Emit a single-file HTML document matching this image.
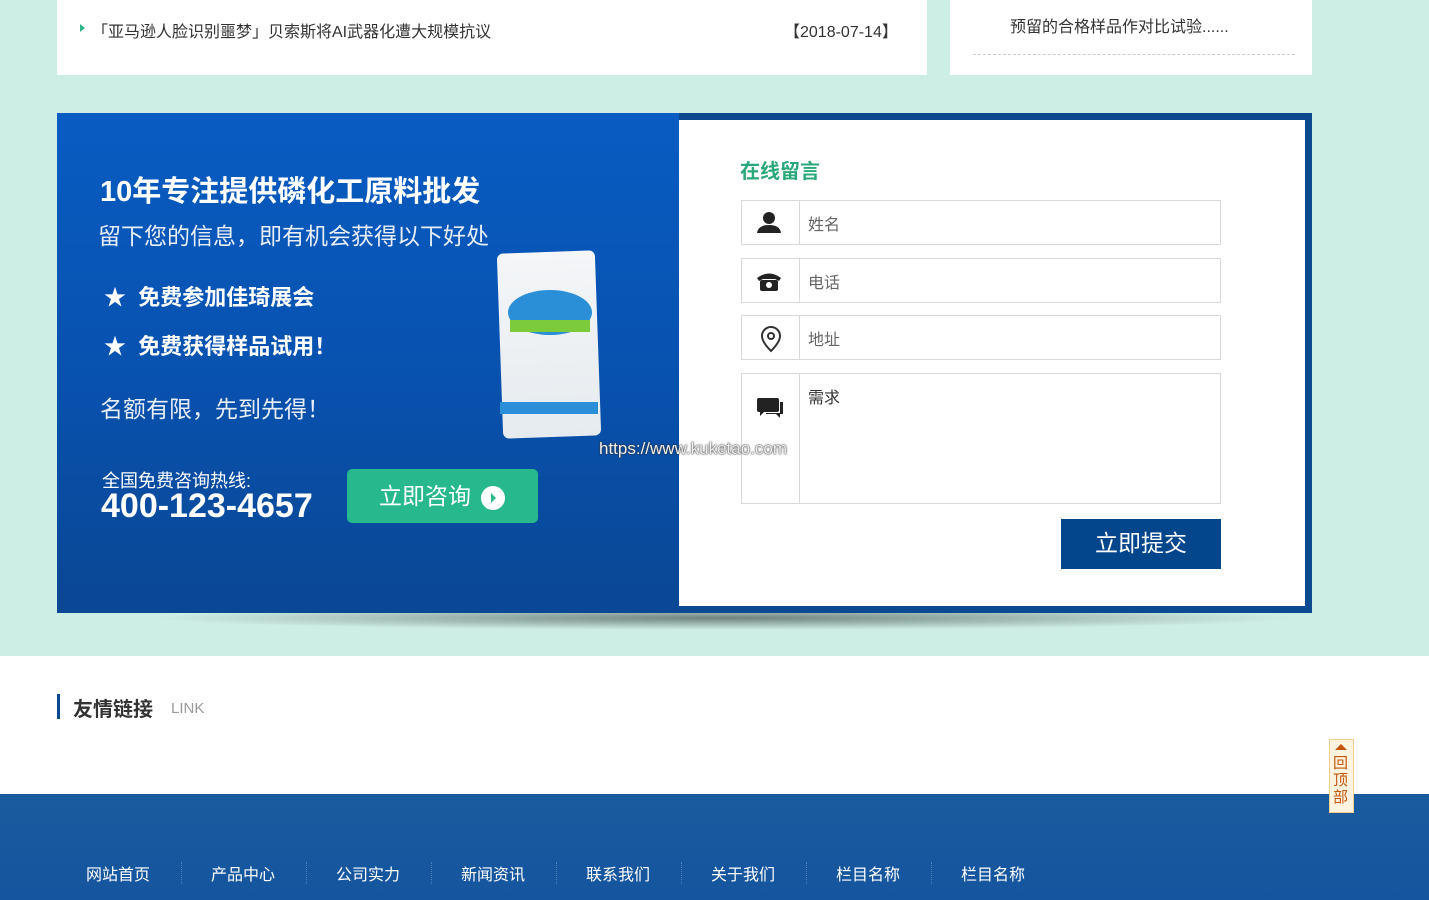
<!DOCTYPE html>
<html><head><meta charset="utf-8"><style>
body{margin:0;width:1429px;height:900px;overflow:hidden;background:#cdeee5;font-family:"Liberation Sans","Noto Sans CJK SC",sans-serif;position:relative}
.abs{position:absolute}
.card{background:#fff}
.nav a{position:absolute;top:861px;color:#fff;font-size:16px;text-decoration:none}
.sep{position:absolute;top:862px;height:22px;border-left:1px dotted #4f7fb8}
.field{position:absolute;left:741px;width:478px;border:1px solid #d9d9d9;background:#fff}
.field .ic{position:absolute;left:0;top:0;bottom:0;width:57px;border-right:1px solid #d9d9d9}
.field span{position:absolute;left:66px;top:10px;font-size:16px;color:#666}
</style></head><body>
<div class="abs card" style="left:57px;top:0;width:870px;height:75px"></div>
<div class="abs" style="left:80px;top:24px;width:0;height:0;border-left:5px solid #2fb58a;border-top:4px solid transparent;border-bottom:4px solid transparent"></div>
<div class="abs" style="left:92px;top:18px;font-size:16px;color:#333">「亚马逊人脸识别噩梦」贝索斯将AI武器化遭大规模抗议</div>
<div class="abs" style="left:784px;top:18px;font-size:16px;color:#333">【2018-07-14】</div>
<div class="abs card" style="left:950px;top:0;width:362px;height:75px"></div>
<div class="abs" style="left:1010px;top:13px;font-size:16px;color:#333">预留的合格样品作对比试验......</div>
<div class="abs" style="left:973px;top:54px;width:322px;border-top:1px dashed #ccc"></div>

<div class="abs" style="left:150px;top:606px;width:1150px;height:24px;border-radius:50%;background:radial-gradient(ellipse at center,rgba(0,0,0,.45),rgba(0,0,0,0) 70%)"></div>
<div class="abs" style="left:57px;top:113px;width:1255px;height:500px;background:#0b4a90"></div>
<div class="abs" style="left:57px;top:113px;width:622px;height:500px;background:linear-gradient(#085cc2,#0852b0 50%,#0a4794)"></div>
<div class="abs" style="left:679px;top:120px;width:626px;height:486px;background:#fff"></div>

<div class="abs" style="left:100px;top:168px;font-size:29px;font-weight:bold;color:#fff">10年专注提供磷化工原料批发</div>
<div class="abs" style="left:98px;top:217px;font-size:23px;color:#e8eef8">留下您的信息，即有机会获得以下好处</div>
<div class="abs" style="left:104px;top:280px;font-size:22px;font-weight:bold;color:#fff">★&nbsp; 免费参加佳琦展会</div>
<div class="abs" style="left:104px;top:329px;font-size:22px;font-weight:bold;color:#fff">★&nbsp; 免费获得样品试用！</div>
<div class="abs" style="left:100px;top:390px;font-size:23px;color:#e8eef8">名额有限，先到先得！</div>
<div class="abs" style="left:102px;top:467px;font-size:18px;color:#fff">全国免费咨询热线:</div>
<div class="abs" style="left:101px;top:487px;font-size:34px;font-weight:bold;color:#fff">400-123-4657</div>
<div class="abs" style="left:347px;top:469px;width:191px;height:54px;border-radius:5px;background:#27b88d"></div>
<div class="abs" style="left:379px;top:477px;font-size:23px;color:#fff">立即咨询</div>
<div class="abs" style="left:481px;top:486px;width:24px;height:24px;border-radius:50%;background:#fff"></div>
<div class="abs" style="left:491px;top:493px;width:0;height:0;border-left:5px solid #27b88d;border-top:5px solid transparent;border-bottom:5px solid transparent"></div>
<div class="abs" style="left:500px;top:252px;width:98px;height:185px;background:linear-gradient(#f4f6f8,#e6ebef);border-radius:6px;transform:rotate(-2deg)"></div>
<div class="abs" style="left:508px;top:290px;width:84px;height:45px;border-radius:50%;background:#2a8fd6"></div>
<div class="abs" style="left:510px;top:320px;width:80px;height:12px;background:#7ccb3a"></div>
<div class="abs" style="left:500px;top:402px;width:98px;height:12px;background:#2a8fd6"></div>

<div class="abs" style="left:740px;top:155px;font-size:20px;font-weight:bold;color:#2aa879">在线留言</div>
<div class="field" style="top:200px;height:43px"><div class="ic"><svg width="57" height="43"><circle cx="27" cy="17" r="6" fill="#222"/><path d="M15 32 Q16 24 27 24 Q38 24 39 32Z" fill="#222"/></svg></div><span>姓名</span></div>
<div class="field" style="top:258px;height:43px"><div class="ic"><svg width="57" height="43"><path d="M15 19 Q27 10 39 19 L37 22 L33 20 L21 20 L17 22Z" fill="#222"/><rect x="18" y="21" width="18" height="11" rx="2" fill="#222"/><circle cx="27" cy="26" r="3" fill="#fff"/></svg></div><span>电话</span></div>
<div class="field" style="top:315px;height:43px"><div class="ic"><svg width="57" height="43"><path d="M29 35 Q20 26 20 20 A9 9 0 0 1 38 20 Q38 26 29 35Z" fill="none" stroke="#333" stroke-width="2"/><circle cx="29" cy="20" r="3" fill="none" stroke="#333" stroke-width="2"/></svg></div><span>地址</span></div>
<div class="field" style="top:373px;height:129px"><div class="ic"><svg width="57" height="129"><rect x="15" y="24" width="22" height="14" rx="2" fill="#222"/><path d="M18 37 L18 42 L23 37Z" fill="#222"/><path d="M38 28 L41 28 L41 40 L38 40 L38 44 L34 40 L24 40 L24 39 L38 39Z" fill="#222"/></svg></div><span style="color:#333">需求</span></div>
<div class="abs" style="left:1061px;top:519px;width:160px;height:50px;background:#04468c;color:#fff;font-size:23px;text-align:center;line-height:48px">立即提交</div>
<div class="abs" style="left:599px;top:439px;font-size:17px;color:#eee;text-shadow:0 0 2px #333,0 0 1px #333">https://www.kuketao.com</div>

<div class="abs" style="left:0;top:656px;width:1429px;height:138px;background:#fff"></div>
<div class="abs" style="left:57px;top:694px;width:3px;height:25px;background:#0b4a90"></div>
<div class="abs" style="left:73px;top:693px;font-size:20px;font-weight:bold;color:#333">友情链接</div>
<div class="abs" style="left:171px;top:700px;font-size:15px;color:#999">LINK</div>
<div class="abs" style="left:0;top:794px;width:1429px;height:106px;background:linear-gradient(#1a5a9e,#15559f)"></div>
<div class="nav">
<a style="left:86px">网站首页</a><div class="sep" style="left:181px"></div>
<a style="left:211px">产品中心</a><div class="sep" style="left:306px"></div>
<a style="left:336px">公司实力</a><div class="sep" style="left:431px"></div>
<a style="left:461px">新闻资讯</a><div class="sep" style="left:556px"></div>
<a style="left:586px">联系我们</a><div class="sep" style="left:681px"></div>
<a style="left:711px">关于我们</a><div class="sep" style="left:806px"></div>
<a style="left:836px">栏目名称</a><div class="sep" style="left:931px"></div>
<a style="left:961px">栏目名称</a>
</div>
<div class="abs" style="left:1329px;top:739px;width:23px;height:72px;background:#fdf3de;border:1px solid #f0cf8e"></div>
<div class="abs" style="left:1335px;top:744px;width:0;height:0;border-bottom:6px solid #c4560c;border-left:6px solid transparent;border-right:6px solid transparent"></div>
<div class="abs" style="left:1333px;top:755px;width:16px;font-size:15px;line-height:17px;color:#c4560c">回顶部</div>
</body></html>
